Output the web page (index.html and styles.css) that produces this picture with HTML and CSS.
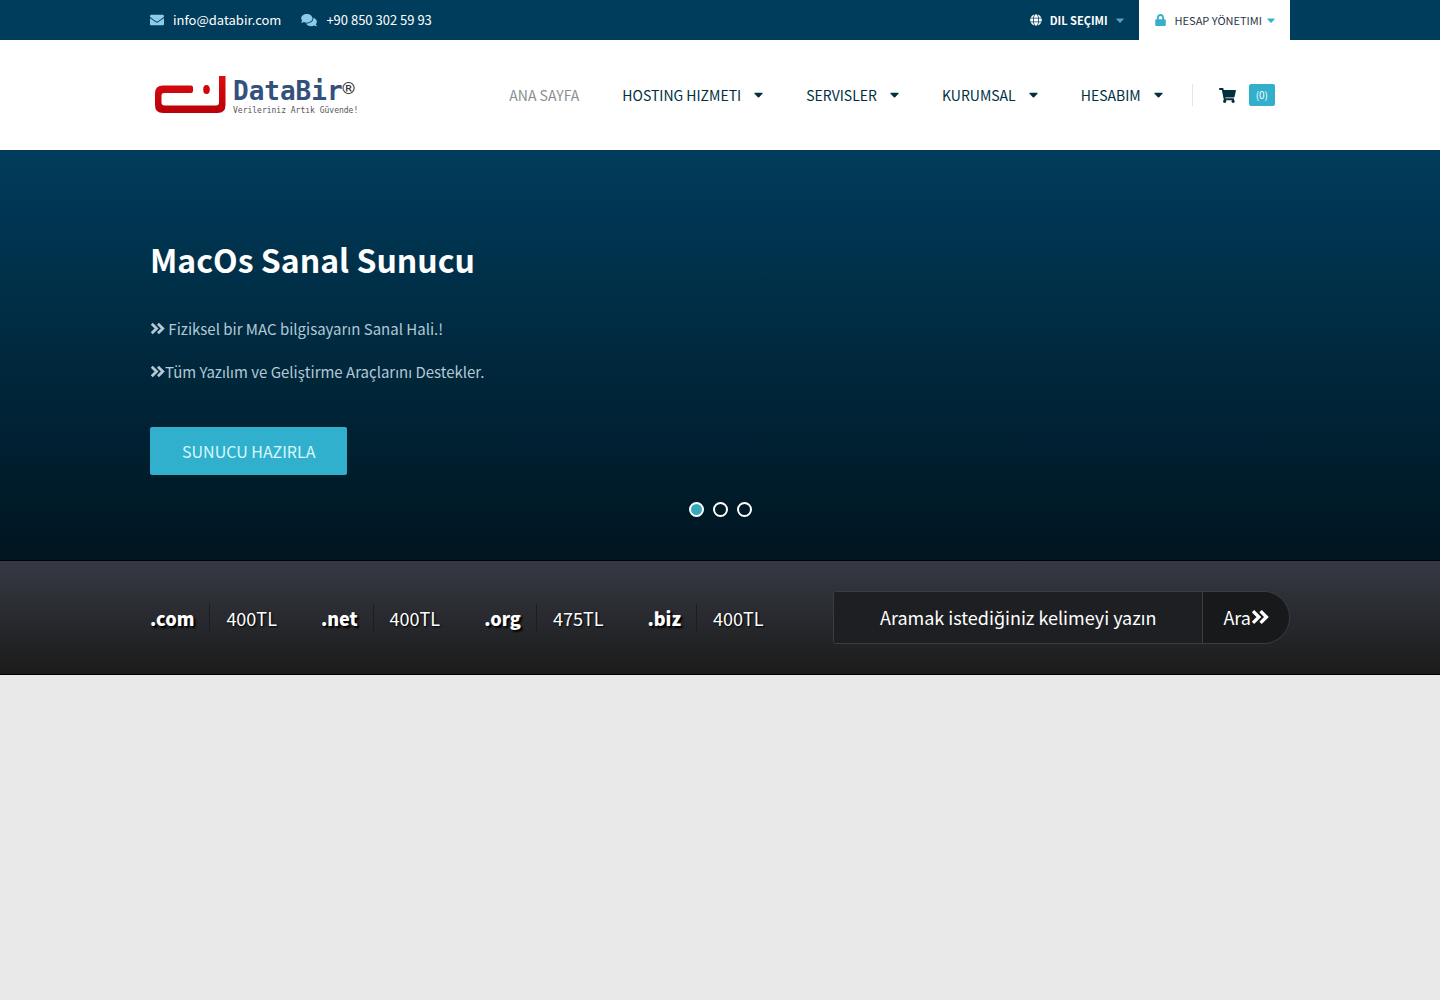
FILE: index.html
```html
<!DOCTYPE html>
<html lang="tr">
<head>
<meta charset="utf-8">
<meta name="viewport" content="width=device-width, initial-scale=1">
<title>DataBir</title>
<link rel="stylesheet" href="styles.css">
</head>
<body>
<svg class="sprite" aria-hidden="true">
  <symbol id="chevrons" viewBox="0 0 16 14"><path d="M1.8 1.8 7 7l-5.200 5.200M8.500 1.800 13.700 7l-5.200 5.200" fill="none" stroke="currentColor" stroke-width="3"/></symbol>
  <symbol id="caret" viewBox="0 0 10 6"><path d="M1 .5h8q1 .2.400 1L5.700 5.500q-.7.600-1.400 0L.6 1.500Q0 .7 1 .5Z" fill="currentColor"/></symbol>
</svg>

<div class="topbar">
  <div class="container topbar-row">
    <div class="contacts">
      <a class="contact" href="mailto:info@databir.com">
        <svg class="icon" width="14" height="14" viewBox="0 0 512 512"><path fill="currentColor" d="M502.300 190.800c3.900-3.100 9.700-.2 9.700 4.700V400c0 26.500-21.500 48-48 48H48c-26.500 0-48-21.500-48-48V195.600c0-5 5.700-7.800 9.700-4.700 22.400 17.400 52.100 39.500 154.100 113.600 21.100 15.400 56.700 47.800 92.200 47.600 35.700.3 72-32.800 92.300-47.600 102-74.100 131.600-96.300 154-113.700zM256 320c23.200.4 56.600-29.200 73.400-41.400 132.700-96.300 142.800-104.700 173.400-128.700 5.800-4.500 9.200-11.500 9.200-18.900v-19c0-26.500-21.500-48-48-48H48c-26.500 0-48 21.500-48 48v19c0 7.400 3.400 14.300 9.200 18.900 30.600 23.900 40.700 32.400 173.400 128.700 16.800 12.200 50.200 41.800 73.400 41.400z"/></svg>
        <span>info@databir.com</span>
      </a>
      <a class="contact" href="tel:+908503025993">
        <svg class="icon" width="16" height="14" viewBox="0 0 576 512"><path fill="currentColor" d="M416 192c0-88.400-93.100-160-208-160S0 103.600 0 192c0 34.300 14.100 65.900 38 92-13.400 30.200-35.500 54.200-35.800 54.500-2.200 2.300-2.800 5.700-1.500 8.700S4.800 352 8 352c36.600 0 66.900-12.300 88.700-25 32.200 15.700 70.300 25 111.300 25 114.900 0 208-71.600 208-160zm122 220c23.900-26 38-57.700 38-92 0-66.900-53.500-124.200-129.300-148.100.9 6.600 1.300 13.300 1.300 20.100 0 105.900-107.700 192-240 192-10.800 0-21.300-.8-31.700-1.900C207.800 439.600 281.800 480 368 480c41 0 79.100-9.200 111.300-25 21.800 12.700 52.100 25 88.700 25 3.200 0 6.100-1.900 7.300-4.800 1.300-2.900.7-6.300-1.500-8.700-.3-.3-22.400-24.200-35.800-54.500z"/></svg>
        <span>+90 850 302 59 93</span>
      </a>
    </div>
    <div class="account">
      <button class="menu-button language" type="button">
        <svg width="12" height="12" viewBox="0 0 496 512"><path fill="currentColor" d="M336.500 160C322 70.700 287.800 8 248 8s-74 62.700-88.500 152h177zM152 256c0 22.200 1.200 43.500 3.300 64h185.300c2.100-20.500 3.300-41.800 3.300-64s-1.200-43.500-3.300-64H155.300c-2.100 20.500-3.300 41.800-3.300 64zm324.700-96c-28.600-67.900-86.500-120.400-158-141.600 24.400 33.800 41.200 84.700 50 141.600h108zM177.200 18.400C105.800 39.600 47.800 92.100 19.300 160h108c8.700-56.900 25.500-107.800 49.900-141.600zM487.400 192H372.700c2.100 21 3.300 42.500 3.300 64s-1.200 43-3.300 64h114.600c5.500-20.500 8.600-41.800 8.600-64s-3.100-43.500-8.500-64zM120 256c0-21.500 1.200-43 3.300-64H8.600C3.200 212.500 0 233.800 0 256s3.200 43.500 8.600 64h114.600c-2-21-3.200-42.500-3.200-64zm39.500 96c14.500 89.300 48.700 152 88.500 152s74-62.700 88.500-152h-177zm159.300 141.600c71.400-21.200 129.400-73.700 158-141.600h-108c-8.800 56.900-25.600 107.800-50 141.600zM19.300 352c28.600 67.900 86.500 120.400 158 141.600-24.400-33.800-41.200-84.700-50-141.600h-108z"/></svg>
        <span>DIL SEÇIMI</span>
        <svg class="caret" width="8" height="5"><use href="#caret"/></svg>
      </button>
      <button class="menu-button manage" type="button">
        <svg class="lock" width="11" height="12" viewBox="0 0 448 512"><path fill="currentColor" d="M400 224h-24v-72C376 68.200 307.800 0 224 0S72 68.200 72 152v72H48c-26.500 0-48 21.500-48 48v192c0 26.500 21.500 48 48 48h352c26.500 0 48-21.500 48-48V272c0-26.500-21.500-48-48-48zm-104 0H152v-72c0-39.700 32.300-72 72-72s72 32.300 72 72v72z"/></svg>
        <span>HESAP YÖNETIMI</span>
        <svg class="caret" width="8" height="5"><use href="#caret"/></svg>
      </button>
    </div>
  </div>
</div>

<header class="header">
  <div class="container header-row">
    <a class="logo" href="#">
      <svg width="71" height="38" viewBox="0 0 71 38"><defs><linearGradient id="red" x2="0" y2="1"><stop stop-color="#dc0d10"/><stop offset="1" stop-color="#b90009"/></linearGradient></defs><path fill="url(#red)" d="M64 0h6.500v29q0 8-8 8H8q-8 0-8-8V17.500Q0 9.500 8 9.500h28q2 0 2 2V15q0 2-2 2H9q-2.500 0-2.500 2.500v7q0 3 3 3H61q3 0 3-3Z"/><ellipse cx="51.500" cy="13.500" rx="3.300" ry="4.500" fill="#cf070c"/></svg>
      <span class="logo-words">
        <span class="logo-name">DataBir<span class="logo-mark">®</span></span>
        <span class="logo-tag">Verileriniz Artık Güvende!</span>
      </span>
    </a>
    <nav class="nav">
      <a class="nav-link current" href="#">ANA SAYFA</a>
      <a class="nav-link" href="#">HOSTING HIZMETI <svg width="9" height="6"><use href="#caret"/></svg></a>
      <a class="nav-link" href="#">SERVISLER <svg width="9" height="6"><use href="#caret"/></svg></a>
      <a class="nav-link" href="#">KURUMSAL <svg width="9" height="6"><use href="#caret"/></svg></a>
      <a class="nav-link" href="#">HESABIM <svg width="9" height="6"><use href="#caret"/></svg></a>
      <a class="cart" href="#">
        <svg width="17" height="15" viewBox="0 0 576 512"><path fill="currentColor" d="M528.100 301.300l47.300-208C578.800 78.300 567.400 64 552 64H159.200l-9.200-44.800C147.800 8 137.900 0 126.500 0H24C10.700 0 0 10.700 0 24v16c0 13.300 10.700 24 24 24h69.900l70.200 343.400C147.300 417.100 136 435.200 136 456c0 30.900 25.100 56 56 56s56-25.100 56-56c0-15.700-6.400-29.800-16.800-40h209.600C430.400 426.200 424 440.300 424 456c0 30.900 25.100 56 56 56s56-25.100 56-56c0-22.200-12.900-41.300-31.600-50.400l5.500-24.300c3.400-15-8-29.300-23.400-29.300H218.100l-6.500-32h293.100c11.200 0 20.900-7.800 23.400-18.700z"/></svg>
        <span class="cart-count">(0)</span>
      </a>
    </nav>
  </div>
</header>

<main>
  <section class="hero">
    <div class="container">
      <h1>MacOs Sanal Sunucu</h1>
      <p class="feature"><svg width="15" height="13"><use href="#chevrons"/></svg> Fiziksel bir MAC bilgisayarın Sanal Hali.!</p>
      <p class="feature"><svg width="15" height="13"><use href="#chevrons"/></svg>Tüm Yazılım ve Geliştirme Araçlarını Destekler.</p>
      <a class="cta" href="#">SUNUCU HAZIRLA</a>
      <div class="dots">
        <button class="dot active" type="button" aria-label="1"></button>
        <button class="dot" type="button" aria-label="2"></button>
        <button class="dot" type="button" aria-label="3"></button>
      </div>
    </div>
  </section>

  <section class="domains">
    <div class="container domains-row">
      <dl class="prices">
        <div class="price"><dt>.com</dt><dd>400TL</dd></div>
        <div class="price"><dt>.net</dt><dd>400TL</dd></div>
        <div class="price"><dt>.org</dt><dd>475TL</dd></div>
        <div class="price"><dt>.biz</dt><dd>400TL</dd></div>
      </dl>
      <form class="search">
        <input type="text" aria-label="Aramak istediğiniz kelimeyi yazın" placeholder="Aramak istediğiniz kelimeyi yazın">
        <button type="button">Ara<svg width="18" height="16"><use href="#chevrons"/></svg></button>
      </form>
    </div>
  </section>
</main>
</body>
</html>
```
FILE: styles.css
```css
* { box-sizing: border-box; }

body {
  margin: 0;
  background: #e9e9e9;
  color: #fff;
  font-family: "Noto Sans CJK SC", "Noto Sans", sans-serif;
  font-size: 14px;
  line-height: 20px;
}

a { color: inherit; text-decoration: none; }
button, input { font: inherit; color: inherit; }
svg { flex: none; }

.sprite { display: none; }

.container {
  width: 100%;
  max-width: 1140px;
  margin: 0 auto;
}

/* Top bar */
.topbar { background: #003c5c; }
.topbar-row, .contacts, .contact, .account, .menu-button { display: flex; }
.topbar-row { justify-content: space-between; min-height: 40px; }
.contacts { align-items: center; gap: 20px; }
.contact { align-items: center; gap: 9px; font-size: 13px; }
.icon { color: #8ccbea; }

.menu-button {
  align-items: center;
  gap: 8px;
  padding: 0 15px 0 16px;
  border: 0;
  background: none;
  font-size: 11px;
}
.language { font-weight: 700; }
.language .caret { color: #5a9fbe; }
.manage { gap: 9px; background: #fff; color: #2c3444; }
.manage .lock, .manage .caret { color: #34b0cb; }
.manage .caret { margin-left: -4px; }

/* Header */
.header { background: #fff; color: #00303f; }
.header-row {
  display: flex;
  align-items: center;
  justify-content: space-between;
  min-height: 110px;
  padding: 0 15px 0 5px;
}
.logo { display: flex; align-items: center; gap: 7px; }
.logo-words {
  display: flex;
  flex-direction: column;
  padding-top: 4px;
  font-family: "DejaVu Sans Mono", "Liberation Mono", monospace;
}
.logo-name {
  display: flex;
  color: #34507c;
  font-size: 26px;
  font-weight: 700;
  line-height: 28px;
}
.logo-mark { color: #333; font-size: 20px; font-weight: 400; line-height: 22px; }
.logo-tag { color: #555; font-size: 8px; line-height: 12px; }

.nav { display: flex; align-items: center; gap: 43px; }
.nav-link { display: flex; align-items: center; gap: 13px; }
.current { color: #8b8f90; }
.cart {
  display: flex;
  align-items: center;
  gap: 13px;
  margin-left: -14px;
  padding-left: 26px;
  border-left: 1px solid #e3e6e8;
}
.cart-count {
  padding: 1px 7px;
  border-radius: 2px;
  background: #31afcb;
  color: #fff;
  font-size: 10px;
}

/* Hero slider */
.hero {
  padding: 87px 0 43px;
  background: linear-gradient(#003c5c, #001520);
}
h1 { margin: 0 0 36px; font-size: 32px; line-height: 44px; }
.feature {
  margin: 0 0 19px;
  color: #b3c9d5;
  font-size: 15px;
  line-height: 24px;
}
.cta {
  display: inline-block;
  margin-top: 24px;
  padding: 12px 32px;
  border-radius: 2px;
  background: #30b0cc;
  color: #d9f8ff;
  font-size: 16px;
  line-height: 24px;
}
.dots { display: flex; justify-content: center; gap: 9px; margin-top: 27px; }
.dot {
  width: 15px;
  height: 15px;
  padding: 0;
  border: 2px solid #fff;
  border-radius: 50%;
  background: none;
}
.active { background: #36aabb; }

/* Domain prices and search */
.domains {
  padding: 30px 0;
  border: solid #000;
  border-width: 1px 0;
  background: linear-gradient(#363944, #1b1b1b);
}
.domains-row { display: flex; align-items: center; justify-content: space-between; }
.prices { display: flex; gap: 44px; margin: 0; font-size: 18px; line-height: 28px; }
.price { display: flex; }
dt {
  padding-right: 15px;
  border-right: 1px solid #1c1d21;
  font-weight: 900;
  text-shadow: 2px 2px 2px #000;
}
dd { margin: 0; padding-left: 16px; text-shadow: 1px 1px 2px #000; }

.search {
  display: flex;
  width: 457px;
  height: 53px;
  border: 1px solid #3b3d43;
  border-radius: 3px 27px 27px 3px;
  overflow: hidden;
  font-size: 18px;
}
.search input {
  flex: 1;
  min-width: 0;
  padding: 0 20px 2px;
  border: 0;
  background: #1e1f23;
  text-align: center;
}
.search input::placeholder { color: #fff; opacity: 1; }
.search button {
  display: flex;
  align-items: center;
  padding: 0 20px 2px;
  border: 0;
  border-left: 1px solid #3b3d43;
  background: #18191a;
}
```
